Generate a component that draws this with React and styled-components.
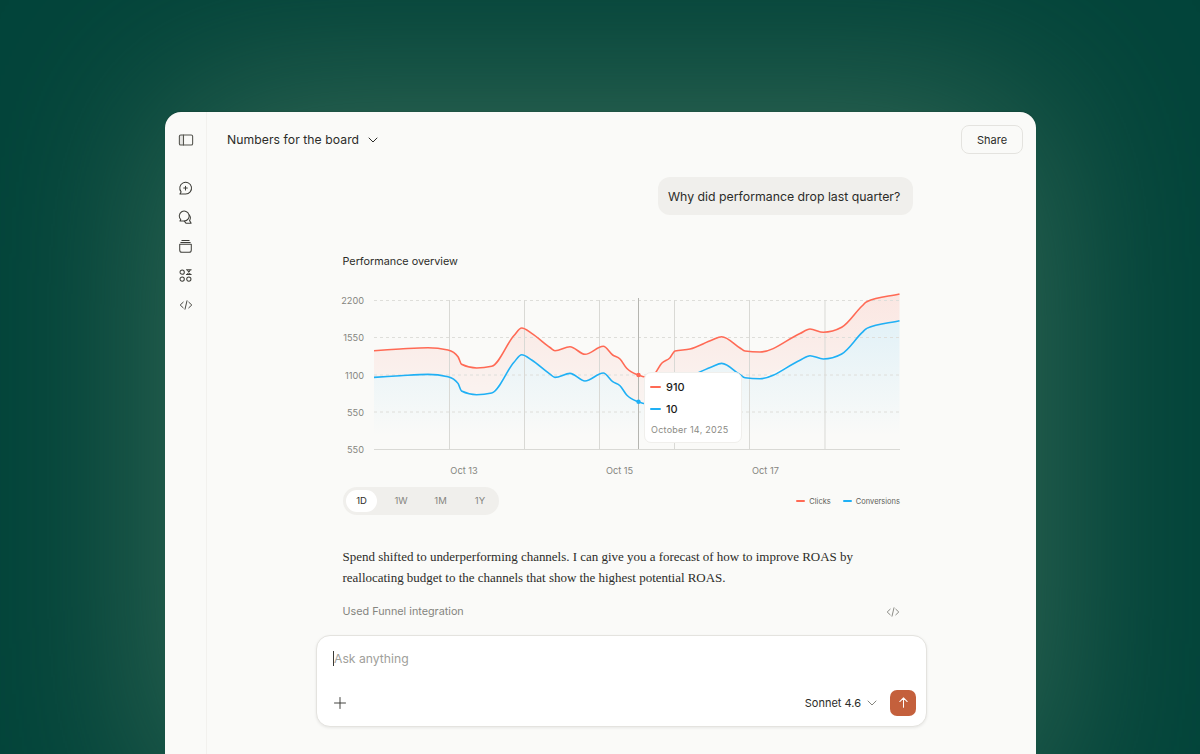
import React from "react";
import styled, { createGlobalStyle } from "styled-components";

const GlobalStyle = createGlobalStyle`
  html, body {
    margin: 0;
    height: 754px;
    overflow: hidden;
  }
  body {
    font-family: Inter, "Liberation Sans", sans-serif;
    background: #03443a;
  }
`;

const Page = styled.div`
  width: 1200px;
  height: 754px;
  padding: 112px 164px 0 165px;
  box-sizing: border-box;
  overflow: hidden;
  background: #03443a;
`;

const Frame = styled.div`
  display: flex;
  height: 700px;
  background: #fafaf8;
  border-radius: 16px 16px 0 0;
  overflow: hidden;
  box-shadow: 0 -12px 190px #396c58, 0 -1px 1px rgba(3, 40, 34, 0.45);
`;

const Rail = styled.nav`
  display: flex;
  flex-direction: column;
  align-items: center;
  width: 42px;
  flex: none;
  padding-top: 20px;
  box-sizing: border-box;
  border-right: 1px solid #f2f1ee;
`;

const RailToggle = styled.div`
  height: 16px;
  margin-bottom: 25.5px;
  color: #55554f;
`;

const RailItem = styled.div`
  display: flex;
  align-items: center;
  justify-content: center;
  height: 29.2px;
  color: #3f3f3a;
`;

const Main = styled.main`
  flex: 1;
  display: flex;
  flex-direction: column;
  align-items: center;
  min-width: 0;
`;

const Header = styled.header`
  display: flex;
  align-items: center;
  justify-content: space-between;
  align-self: stretch;
  height: 55px;
  flex: none;
  padding: 0 13px 0 20px;
`;

const TitleButton = styled.div`
  display: flex;
  align-items: center;
  gap: 9px;
  font-size: 12.2px;
  letter-spacing: 0.06px;
  color: #2c2c29;
`;

const ShareButton = styled.button`
  width: 62px;
  height: 29px;
  padding: 0;
  border: 1px solid #e4e3df;
  border-radius: 8px;
  background: transparent;
  font: 400 11px Inter, "Liberation Sans", sans-serif;
  color: #2c2c29;
`;

const Thread = styled.section`
  display: flex;
  flex-direction: column;
  width: 584px;
  margin: 10px 1px 0 0;
`;

const UserBubble = styled.div`
  align-self: flex-end;
  width: 255px;
  height: 38px;
  box-sizing: border-box;
  padding-left: 10px;
  display: flex;
  align-items: center;
  border-radius: 12px;
  background: #f0efec;
  font-size: 12.3px;
  white-space: nowrap;
  color: #2c2c29;
`;

const Answer = styled.div`
  display: flex;
  flex-direction: column;
  padding: 0 13px;
`;

const ChartTitle = styled.h3`
  margin: 40px 0 21px;
  padding-left: 0.5px;
  height: 14px;
  font-size: 10.8px;
  line-height: 14px;
  font-weight: 400;
  color: #2c2c29;
`;

const ChartWrap = styled.div`
  position: relative;
  width: 558px;
  height: 190px;
  svg {
    display: block;
    overflow: visible;
  }
  text {
    font-family: "Inter", "Liberation Sans", sans-serif;
    font-size: 9.2px;
    fill: #85857f;
  }
`;

const Tooltip = styled.div`
  position: absolute;
  left: 302px;
  top: 82px;
  width: 98px;
  height: 71px;
  box-sizing: border-box;
  padding: 3px 5px 0;
  background: #fff;
  border: 1px solid #f0efec;
  border-radius: 7px;
`;

const TipRow = styled.div`
  display: flex;
  align-items: center;
  gap: 5px;
  height: 22px;
  font-size: 11px;
  font-weight: 500;
  color: #1b1b19;
`;

const Swatch = styled.i`
  display: block;
  width: ${(props) => props.$w || 11}px;
  height: ${(props) => props.$h || 2.5}px;
  border-radius: 1px;
  background: ${(props) => props.$color};
`;

const TipDate = styled.div`
  margin-top: 4px;
  padding-left: 1px;
  font-size: 9px;
  letter-spacing: 0.25px;
  white-space: nowrap;
  color: #8a8a84;
`;

const ChartFoot = styled.div`
  display: flex;
  align-items: center;
  justify-content: space-between;
  margin-top: 6.5px;
  padding-left: 1px;
`;

const RangeTabs = styled.div`
  display: flex;
  gap: 8.5px;
  padding: 3px;
  border-radius: 14px;
  background: #f0efec;
`;

const RangeTab = styled.div`
  width: 31px;
  height: 22.5px;
  display: flex;
  align-items: center;
  justify-content: center;
  border-radius: 11px;
  font-size: 9.5px;
  background: ${(props) => (props.$active ? "#fff" : "transparent")};
  color: ${(props) => (props.$active ? "#2c2c29" : "#85857f")};
`;

const Legend = styled.div`
  display: flex;
  align-items: center;
  gap: 12px;
  padding-top: 1px;
`;

const LegendItem = styled.div`
  display: flex;
  align-items: center;
  gap: 4px;
  font-size: 7.5px;
  color: #5f5f5a;
`;

const Reply = styled.p`
  margin: 30.5px 0 0;
  padding-left: 0.5px;
  font-family: "Liberation Serif", serif;
  font-size: 13px;
  letter-spacing: -0.02px;
  line-height: 21px;
  color: #2c2c29;
`;

const ToolRow = styled.div`
  display: flex;
  align-items: center;
  justify-content: space-between;
  margin-top: 17px;
  padding-left: 0.5px;
  font-size: 10.8px;
  color: #85857f;
`;

const Composer = styled.div`
  display: flex;
  flex-direction: column;
  justify-content: space-between;
  width: 611px;
  height: 92px;
  margin-top: 16px;
  flex: none;
  box-sizing: border-box;
  padding: 15px 10px 10px 16px;
  background: #fff;
  border: 1px solid #e4e3df;
  border-radius: 14px;
  box-shadow: 0 1px 3px rgba(0, 0, 0, 0.08);
`;

const Prompt = styled.div`
  display: flex;
  align-items: center;
  font-size: 12.2px;
  color: #a0a09a;
`;

const Caret = styled.span`
  width: 1px;
  height: 15px;
  background: #3a3a36;
`;

const ComposerBar = styled.div`
  display: flex;
  align-items: center;
  justify-content: space-between;
`;

const AddButton = styled.div`
  display: flex;
  color: #3a3a36;
`;

const ComposerActions = styled.div`
  display: flex;
  align-items: center;
  gap: 13px;
`;

const ModelPick = styled.div`
  display: flex;
  align-items: center;
  gap: 6px;
  font-size: 11px;
  color: #2c2c29;
`;

const ModelCaret = styled.span`
  display: flex;
  color: #85857f;
`;

const SendButton = styled.div`
  width: 26px;
  height: 26px;
  display: flex;
  align-items: center;
  justify-content: center;
  border-radius: 7px;
  background: #c4603c;
  color: #fff;
`;

const redPoints = [
  [374, 350.7], [400, 349], [428, 347.7], [448, 350], [458, 356.7], [461.5, 364.3], [476.7, 368], [491.7, 366.3],
  [514, 335.5], [521.7, 328], [531.7, 333.3], [550, 347.5], [555, 350.7], [570, 346.7], [585, 354.3], [603.3, 346.3],
  [612.7, 355], [620, 359], [626.7, 368.3], [638.3, 375], [645, 377], [653.3, 375], [661.7, 363.3], [670, 357.7],
  [675, 351], [690, 349], [712, 340], [721.7, 336.7], [740, 348], [745, 351], [760, 352], [800, 333.5], [810, 329],
  [823.3, 332.3], [841.7, 327.3], [862, 306], [866.7, 301.7], [899.5, 294],
];
const bluePoints = redPoints.map(([x, y]) => [x, y + 26.7]);

// monotone cubic through the points so peaks don't overshoot
function smooth(points) {
  const n = points.length;
  const secant = (i) => (points[i + 1][1] - points[i][1]) / (points[i + 1][0] - points[i][0]);
  const slopes = points.map((p, i) => {
    if (i === 0) return secant(0);
    if (i === n - 1) return secant(n - 2);
    const s0 = secant(i - 1);
    const s1 = secant(i);
    const h0 = Math.abs(p[0] - points[i - 1][0]);
    const h1 = Math.abs(points[i + 1][0] - p[0]);
    const mid = (s0 * h1 + s1 * h0) / (h0 + h1);
    return (Math.sign(s0) + Math.sign(s1)) * Math.min(Math.abs(s0), Math.abs(s1), 0.5 * Math.abs(mid));
  });
  let d = `M${points[0][0]} ${points[0][1].toFixed(1)}`;
  for (let i = 0; i < n - 1; i++) {
    const [x0, y0] = points[i];
    const [x1, y1] = points[i + 1];
    const h = (x1 - x0) / 3;
    d += `C${(x0 + h).toFixed(1)} ${(y0 + slopes[i] * h).toFixed(1)} ${(x1 - h).toFixed(1)} ${(y1 - slopes[i + 1] * h).toFixed(1)} ${x1} ${y1.toFixed(1)}`;
  }
  return d;
}

const redLine = smooth(redPoints);
const blueLine = smooth(bluePoints);
const blueBack = bluePoints
  .slice()
  .reverse()
  .map(([x, y]) => `L${x} ${y.toFixed(1)}`)
  .join("");

const yTicks = [
  ["2200", 300.5],
  ["1550", 337.5],
  ["1100", 375],
  ["550", 412],
];

function PerformanceChart() {
  return (
    <svg width="558" height="190" viewBox="342 290 558 190">
      <defs>
        <linearGradient id="redFade" gradientUnits="userSpaceOnUse" x1="0" y1="300" x2="0" y2="430">
          <stop offset="0" stopColor="#ff6a55" stopOpacity="0.13" />
          <stop offset="1" stopColor="#ff6a55" stopOpacity="0.02" />
        </linearGradient>
        <linearGradient id="blueFade" gradientUnits="userSpaceOnUse" x1="0" y1="320" x2="0" y2="436">
          <stop offset="0" stopColor="#1eaaf0" stopOpacity="0.11" />
          <stop offset="1" stopColor="#1eaaf0" stopOpacity="0" />
        </linearGradient>
      </defs>
      <path d={`${redLine}${blueBack}Z`} fill="url(#redFade)" />
      <path d={`${blueLine}L899.5 449L374 449Z`} fill="url(#blueFade)" />
      {yTicks.map(([label, y]) => (
        <g key={y}>
          <line x1="374" x2="900" y1={y} y2={y} stroke="#dededa" strokeDasharray="3 3" />
          <text x="364" y={y + 3.5} textAnchor="end">{label}</text>
        </g>
      ))}
      <line x1="374" x2="900" y1="449.5" y2="449.5" stroke="#d9d9d5" />
      <text x="364" y="453" textAnchor="end">550</text>
      {[449.5, 524.5, 599.5, 674.5, 749.5, 825].map((x) => (
        <line key={x} x1={x} x2={x} y1="300" y2="449" stroke="#d9d9d5" />
      ))}
      <line x1="638.5" x2="638.5" y1="298" y2="449" stroke="#b5b5b0" />
      <text x="464" y="473.5" textAnchor="middle">Oct 13</text>
      <text x="619.5" y="473.5" textAnchor="middle">Oct 15</text>
      <text x="765.5" y="473.5" textAnchor="middle">Oct 17</text>
      <path d={redLine} fill="none" stroke="#ff6a55" strokeWidth="1.6" strokeLinejoin="round" />
      <path d={blueLine} fill="none" stroke="#1fb0f5" strokeWidth="1.6" strokeLinejoin="round" />
      <circle cx="638.5" cy="375" r="2.2" fill="#ff6a55" />
      <circle cx="638.5" cy="401.7" r="2.2" fill="#1fb0f5" />
    </svg>
  );
}

const Glyph = ({ size = 15, children }) => (
  <svg width={size} height={size} viewBox="0 0 14 14" fill="none" stroke="currentColor" strokeWidth="0.95" strokeLinecap="round" strokeLinejoin="round">
    {children}
  </svg>
);

const Chevron = () => (
  <svg width="10" height="6" viewBox="0 0 10 6" fill="none" stroke="currentColor" strokeWidth="1" strokeLinecap="round" strokeLinejoin="round">
    <path d="M1 1l4 4 4-4" />
  </svg>
);

const CodeGlyph = () => (
  <Glyph size={14}>
    <path d="M4.2 4.2L1.2 7l3 2.8M9.8 4.2l3 2.8-3 2.8M8 2.8L6 11.2" />
  </Glyph>
);

const railIcons = [
  <Glyph key="new">
    <path d="M2.9 10.2A5.5 5.5 0 1 1 7 12.2H1.8z" />
    <path d="M7 4.9v3.4M5.3 6.6h3.4" />
  </Glyph>,
  <Glyph key="chats">
    <path d="M2.6 8.9A4.6 4.6 0 1 1 6 10.2H1.8z" />
    <path d="M10.4 4.6c1.1 1.2 1.4 3.6.4 5.3l1.5 2.4H7.4l-1.5-1.9" />
  </Glyph>,
  <Glyph key="projects">
    <path d="M3.6 1.4h6.8M2.6 3.2h8.8" />
    <path d="M1.6 5h10.8v5.2a2.2 2.2 0 0 1-2.2 2.2H3.8a2.2 2.2 0 0 1-2.2-2.2z" />
  </Glyph>,
  <Glyph key="artifacts">
    <circle cx="3.9" cy="3.9" r="2" />
    <circle cx="3.9" cy="10.3" r="2" />
    <circle cx="10.1" cy="10.3" r="2" />
    <path d="M7.9 1.7h4.4M7.9 6.1h4.4M8.6 1.7l3 4.4M11.6 1.7l-3 4.4" />
  </Glyph>,
  <CodeGlyph key="code" />,
];

export default function App() {
  return (
    <Page>
      <GlobalStyle />
      <Frame>
        <Rail>
          <RailToggle>
            <Glyph size={16}>
              <rect x="1.2" y="2.6" width="3.6" height="8.8" fill="currentColor" fillOpacity="0.12" stroke="none" />
              <rect x="1.2" y="2.6" width="11.6" height="8.8" rx="1.2" />
              <path d="M4.8 2.6v8.8" />
            </Glyph>
          </RailToggle>
          {railIcons.map((icon) => (
            <RailItem key={icon.key}>{icon}</RailItem>
          ))}
        </Rail>
        <Main>
          <Header>
            <TitleButton>
              Numbers for the board
              <Chevron />
            </TitleButton>
            <ShareButton>Share</ShareButton>
          </Header>
          <Thread>
            <UserBubble>Why did performance drop last quarter?</UserBubble>
            <Answer>
              <ChartTitle>Performance overview</ChartTitle>
              <ChartWrap>
                <PerformanceChart />
                <Tooltip>
                  <TipRow>
                    <Swatch $color="#ff6a55" />
                    910
                  </TipRow>
                  <TipRow>
                    <Swatch $color="#1fb0f5" />
                    10
                  </TipRow>
                  <TipDate>October 14, 2025</TipDate>
                </Tooltip>
              </ChartWrap>
              <ChartFoot>
                <RangeTabs>
                  <RangeTab $active>1D</RangeTab>
                  <RangeTab>1W</RangeTab>
                  <RangeTab>1M</RangeTab>
                  <RangeTab>1Y</RangeTab>
                </RangeTabs>
                <Legend>
                  <LegendItem>
                    <Swatch $w={9} $h={2} $color="#ff6a55" />
                    Clicks
                  </LegendItem>
                  <LegendItem>
                    <Swatch $w={9} $h={2} $color="#1fb0f5" />
                    Conversions
                  </LegendItem>
                </Legend>
              </ChartFoot>
              <Reply>
                Spend shifted to underperforming channels. I can give you a forecast of how to improve ROAS by
                reallocating budget to the channels that show the highest potential ROAS.
              </Reply>
              <ToolRow>
                Used Funnel integration
                <CodeGlyph />
              </ToolRow>
            </Answer>
          </Thread>
          <Composer>
            <Prompt>
              <Caret />
              Ask anything
            </Prompt>
            <ComposerBar>
              <AddButton>
                <Glyph size={14}>
                  <path d="M7 1.5v11M1.5 7h11" />
                </Glyph>
              </AddButton>
              <ComposerActions>
                <ModelPick>
                  Sonnet 4.6
                  <ModelCaret>
                    <Chevron />
                  </ModelCaret>
                </ModelPick>
                <SendButton>
                  <Glyph size={13}>
                    <path d="M7 12V2.2M3 6l4-4 4 4" strokeWidth="1.1" />
                  </Glyph>
                </SendButton>
              </ComposerActions>
            </ComposerBar>
          </Composer>
        </Main>
      </Frame>
    </Page>
  );
}
